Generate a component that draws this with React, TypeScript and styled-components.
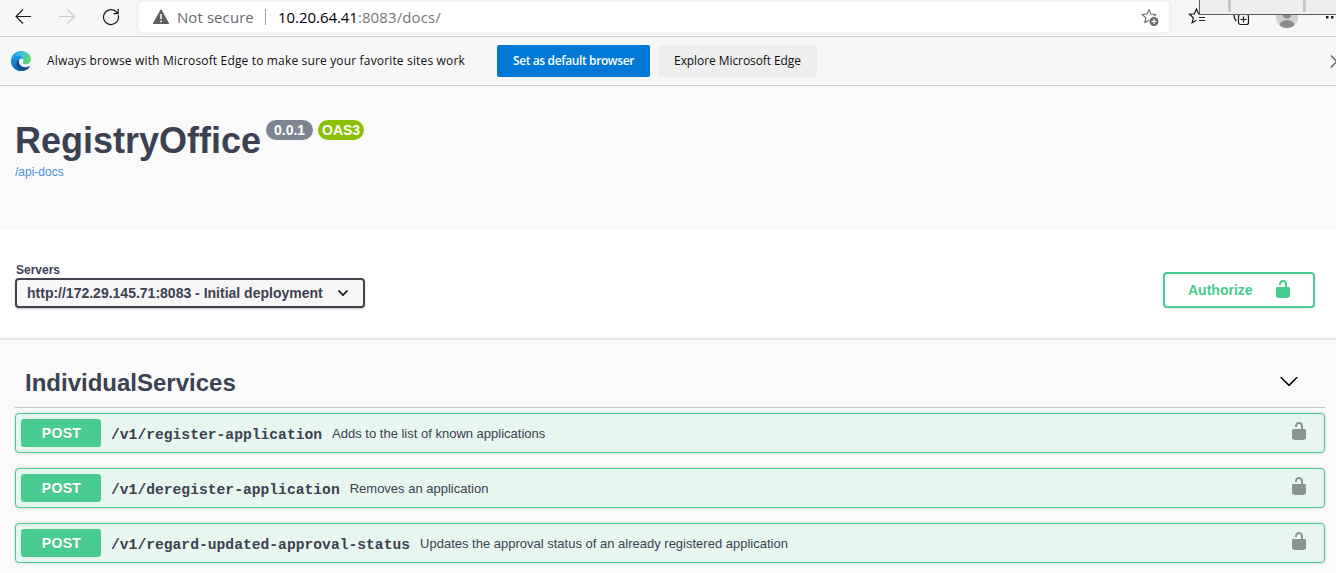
import React from "react";
import styled, { createGlobalStyle } from "styled-components";

const GlobalStyle = createGlobalStyle`
  *, *::before, *::after { box-sizing: border-box; }
  html, body { margin: 0; height: 573px; overflow: hidden; background: #fafafa; }
  body { font-family: "Liberation Sans", Arial, sans-serif; color: #3b4151; }
  svg { display: block; flex: none; }
  button { font: inherit; margin: 0; }
`;

const segoe = `"Open Sans", "Noto Sans", sans-serif`;

const Page = styled.div`
  position: relative;
  width: 1336px;
  height: 573px;
  overflow: hidden;
  background: #fafafa;
`;

const Toolbar = styled.header`
  display: flex;
  align-items: flex-start;
  height: 37px;
  padding: 2px 0 0 13px;
  background: #f7f7f7;
  border-bottom: 1px solid #d0d0d0;
`;

const NavButton = styled.span<{ $gap: number }>`
  display: flex;
  flex: none;
  width: 20px;
  height: 30px;
  align-items: center;
  justify-content: center;
  margin-right: ${(p) => p.$gap}px;
`;

const AddressBar = styled.div`
  display: flex;
  flex: none;
  align-items: center;
  width: 1030px;
  height: 30px;
  padding: 0 9px 0 13px;
  background: #fff;
  border-radius: 4px;
  box-shadow: 0 0 0 3px #f2f2f2;
  font-family: ${segoe};
  font-size: 15px;
  white-space: nowrap;
`;

const Security = styled.span`
  margin-left: 7px;
  width: 77px;
  color: #6b6b6b;
  letter-spacing: 0.08px;
`;

const Divider = styled.span`
  width: 1px;
  height: 16px;
  margin: 0 12px 0 11px;
  background: #9a9a9a;
`;

const Url = styled.span`
  flex: 1;
  color: #767676;
  letter-spacing: 0.1px;
  b { font-weight: 400; color: #000; letter-spacing: -0.05px; }
`;

const ToolIcons = styled.div`
  display: flex;
  flex: none;
  align-items: center;
  height: 30px;
  margin-left: 19px;
  gap: 24px;
`;

const CaptureStrip = styled.div`
  position: absolute;
  top: 0;
  right: 0;
  display: flex;
  width: 137px;
  height: 15px;
  padding-left: 28px;
  gap: 72px;
  background: #eee;
  border-left: 1px solid #5f5f5f;
  border-bottom: 1px solid #5f5f5f;
`;

const StripMark = styled.span`
  width: 3px;
  height: 12px;
  background: #c9c9c9;
`;

const Notice = styled.section`
  display: flex;
  align-items: center;
  height: 49px;
  padding-left: 11px;
  background: #f7f7f7;
  border-bottom: 1px solid #d0d0d0;
  font-family: ${segoe};
  font-size: 12px;
  color: #101010;
  white-space: nowrap;
`;

const NoticeText = styled.span`
  width: 450px;
  margin-left: 16px;
  padding-bottom: 2px;
  letter-spacing: 0.16px;
`;

const NoticeButton = styled.button<{ $primary?: boolean }>`
  width: ${(p) => (p.$primary ? 153 : 159)}px;
  height: 32px;
  margin-right: 8px;
  padding: 0 0 1px;
  border: 0;
  border-radius: 2px;
  font-size: 12px;
  font-weight: ${(p) => (p.$primary ? 600 : 500)};
  letter-spacing: ${(p) => (p.$primary ? -0.38 : -0.08)}px;
  color: ${(p) => (p.$primary ? "#fff" : "#101010")};
  background: ${(p) => (p.$primary ? "#0078d7" : "#eee")};
`;

const CloseSlot = styled.span`
  margin-left: auto;
  width: 6px;
  overflow: hidden;
`;

const Info = styled.section`
  height: 144px;
  padding: 34px 15px 0;
`;

const TitleRow = styled.div`
  display: flex;
  align-items: flex-start;
  height: 45px;
`;

const Title = styled.h1`
  margin: 0 5px 0 0;
  font-size: 36px;
  line-height: 42px;
  font-weight: 700;
`;

const Badge = styled.span<{ $color: string; $width: number }>`
  width: ${(p) => p.$width}px;
  height: 20px;
  margin: 0 5px 0 0;
  border-radius: 10px;
  background: ${(p) => p.$color};
  color: #fff;
  font-size: 14px;
  font-weight: 700;
  line-height: 21px;
  text-align: center;
`;

const DocsLink = styled.a`
  display: block;
  font-size: 12px;
  line-height: 14px;
  color: #4990e2;
`;

const Scheme = styled.section`
  display: flex;
  justify-content: space-between;
  align-items: flex-start;
  height: 108px;
  padding: 32px 21px 0 15px;
  background: #fff;
  box-shadow: 0 1px 2px rgba(0, 0, 0, 0.15);
`;

const ServersLabel = styled.div`
  height: 16px;
  padding-left: 1px;
  font-size: 12px;
  font-weight: 700;
  line-height: 16px;
`;

const Select = styled.div`
  display: flex;
  align-items: center;
  justify-content: space-between;
  width: 350px;
  height: 30px;
  padding: 0 14px 0 10px;
  border: 2px solid #41444e;
  border-radius: 4px;
  background: #f7f7f7;
  box-shadow: 0 1px 2px rgba(0, 0, 0, 0.25);
  font-size: 14px;
  font-weight: 700;
  white-space: nowrap;
`;

const Authorize = styled.button`
  display: flex;
  align-items: center;
  justify-content: space-between;
  width: 152px;
  height: 36px;
  margin-top: 10px;
  padding: 0 20px 0 23px;
  border: 2px solid #49cc90;
  border-radius: 4px;
  background: #fff;
  box-shadow: 0 1px 2px rgba(0, 0, 0, 0.1);
  color: #49cc90;
  font-size: 14px;
  font-weight: 700;
  svg { margin-bottom: 2px; }
`;

const Operations = styled.main`
  padding: 20px 11px 0 15px;
`;

const TagHeader = styled.h2`
  display: flex;
  align-items: center;
  justify-content: space-between;
  height: 50px;
  margin: 0 0 5px;
  padding: 0 26px 0 10px;
  border-bottom: 1px solid rgba(59, 65, 81, 0.3);
  font-size: 24px;
  font-weight: 700;
  svg { margin-bottom: 4px; }
`;

const Operation = styled.article`
  display: flex;
  align-items: center;
  height: 40px;
  margin-bottom: 15px;
  padding: 0 15px 0 5px;
  border: 1px solid #49cc90;
  border-radius: 4px;
  background: #e8f6f0;
  box-shadow: 0 0 3px rgba(0, 0, 0, 0.19);
  white-space: nowrap;
`;

const Method = styled.span`
  width: 80px;
  height: 28px;
  padding-left: 1px;
  border-radius: 3px;
  background: #49cc90;
  color: #fff;
  font-size: 14px;
  font-weight: 700;
  letter-spacing: 0.3px;
  line-height: 29px;
  text-align: center;
  text-shadow: 0 1px 0 rgba(0, 0, 0, 0.1);
`;

const Path = styled.span`
  margin: 4px 10px 0;
  font-family: "Liberation Mono", monospace;
  font-size: 14.66px;
  font-weight: 700;
`;

const Summary = styled.span`
  flex: 1;
  font-size: 13px;
`;

const LockSlot = styled.span`
  margin-bottom: 4px;
`;

const Lock = ({ color }: { color: string }) => (
  <svg width="20" height="20" viewBox="0 0 20 20" fill={color}>
    <path d="M15.8 8H14V5.6C14 2.703 12.665 1 10 1 7.334 1 6 2.703 6 5.6V6h2v-.801C8 3.754 8.797 3 10 3c1.203 0 2 .754 2 2.199V8H4c-.553 0-1 .646-1 1.199V17c0 .549.428 1.139.951 1.307l1.197.387C5.672 18.861 6.55 19 7.1 19h5.8c.549 0 1.428-.139 1.951-.307l1.196-.387c.524-.167.953-.757.953-1.306V9.199C17 8.646 16.352 8 15.8 8z" />
  </svg>
);

const Arrow = ({ color, flip }: { color: string; flip?: boolean }) => (
  <svg width="18" height="18" viewBox="0 0 18 18" fill="none" stroke={color} strokeWidth="1.1">
    <path d={flip ? "M1 8.5h15.500M9.500 1.500l7 7-7 7" : "M17 8.5H2M9 1.500l-7 7 7 7"} />
  </svg>
);

const EdgeLogo = () => (
  <svg width="20" height="20" viewBox="0 0 20 20">
    <defs>
      <linearGradient id="edgeTop" x1="0" y1="0.3" x2="1" y2="0.5">
        <stop offset="0" stopColor="#1b9fe0" />
        <stop offset="0.5" stopColor="#35c1d8" />
        <stop offset="1" stopColor="#66dc5c" />
      </linearGradient>
      <linearGradient id="edgeLeft" x1="0.3" y1="0" x2="0.5" y2="1">
        <stop offset="0" stopColor="#1b9de2" />
        <stop offset="1" stopColor="#1261b0" />
      </linearGradient>
    </defs>
    <path d="M0 9C.6 3.8 4.8 0 10.1 0 16 0 20 4.1 20 8.2c0 3-2.3 5-5.2 5-2.2 0-3.5-.8-3.1-1.5.5-.7.9-1.2.9-2.2C12.6 6.8 9.7 4.7 6.4 4.7 3.5 4.7 1 6.5 0 9z" fill="url(#edgeTop)" />
    <path d="M0 9c1-2.800 3.700-4.400 6.500-4.400 3.200 0 6 1.900 6.100 4.600-.8-1.600-2-2-3.300-1.400C6.600 9 5.300 11.600 6.100 14.500c.7 2.700 2.800 4.700 5.600 5.300C5.500 20.900-.6 16 0 9z" fill="url(#edgeLeft)" />
    <path d="M8.500 8.300c-1.900 3.800 1.400 8 5.800 8 1.800 0 3.100-.5 4.200-1.200.4-.2.700.1.500.5-1.400 2.500-4.200 4.400-7.300 4.300C7.800 19.500 5.300 16.300 5.300 13c0-2.100 1.200-3.900 3.200-4.700z" fill="#124f91" />
  </svg>
);

const operations = [
  { path: "/v1/register-application", summary: "Adds to the list of known applications" },
  { path: "/v1/deregister-application", summary: "Removes an application" },
  { path: "/v1/regard-updated-approval-status", summary: "Updates the approval status of an already registered application" },
];

const starPath = "M8 1.500l2 4.500 4.800.5-3.600 3.300 1 4.900L8 12.300l-4.200 2.400 1-4.900L1.200 6.500 6 6z";

export default function App() {
  return (
    <Page>
      <GlobalStyle />
      <Toolbar>
        <NavButton $gap={24}><Arrow color="#1a1a1a" /></NavButton>
        <NavButton $gap={24}><Arrow color="#c9c9c9" flip /></NavButton>
        <NavButton $gap={18}>
          <svg width="18" height="18" viewBox="0 0 18 18" fill="none" stroke="#1a1a1a" strokeWidth="1.2">
            <path d="M16.300 7.300A7.500 7.500 0 1 1 14 3.500l2 2M16.200 1v4.700h-4.700" />
          </svg>
        </NavButton>
        <AddressBar>
          <svg width="18" height="16" viewBox="0 0 18 16">
            <path d="M9 1l7.500 13.500h-15z" fill="#5f5f5f" stroke="#5f5f5f" strokeWidth="1.200" strokeLinejoin="round" />
            <path d="M9 5v5M9 11.500v1.700" stroke="#fff" strokeWidth="1.500" />
          </svg>
          <Security>Not secure</Security>
          <Divider />
          <Url><b>10.20.64.41</b>:8083/docs/</Url>
          <svg width="20" height="20" viewBox="0 0 20 20" fill="none">
            <path d={starPath} transform="translate(1 1)" stroke="#6b6b6b" strokeWidth="1.100" strokeLinejoin="round" />
            <circle cx="14" cy="14.500" r="5.300" fill="#fff" />
            <circle cx="14" cy="14.500" r="4.500" fill="#6b6b6b" />
            <path d="M11.500 14.500h5M14 12v5" stroke="#fff" strokeWidth="1.200" />
          </svg>
        </AddressBar>
        <ToolIcons>
          <svg width="20" height="20" viewBox="0 0 20 20" fill="none" stroke="#1a1a1a" strokeWidth="1.200">
            <path d="M12 7l-1.500-.2L8.500 2l-2 4.800-5 .5 3.800 3.500-1.200 5 4.400-2.500M11 10.500h6M11 13.500h6" />
          </svg>
          <svg width="20" height="20" viewBox="0 0 20 20" fill="none" stroke="#1a1a1a" strokeWidth="1.200">
            <rect x="6.500" y="7.500" width="10" height="10" rx="2" />
            <path d="M11.500 9.500v6M8.500 12.500h6M4.500 14C2.500 12.500 2 10.500 2 8V4h11" />
          </svg>
          <svg width="22" height="22" viewBox="0 0 22 22">
            <clipPath id="avatar"><circle cx="11" cy="11" r="11" /></clipPath>
            <g clipPath="url(#avatar)">
              <rect width="22" height="22" fill="#d2d0ce" />
              <circle cx="11" cy="8" r="4.500" fill="#8e8c8a" />
              <ellipse cx="11" cy="20" rx="7.800" ry="6" fill="#8e8c8a" />
            </g>
          </svg>
          <svg width="16" height="20" viewBox="0 0 16 20" fill="#1a1a1a">
            <rect x="4" y="9" width="2.500" height="2.500" /><rect x="9" y="9" width="2.500" height="2.500" />
          </svg>
        </ToolIcons>
      </Toolbar>
      <CaptureStrip><StripMark /><StripMark /></CaptureStrip>
      <Notice>
        <EdgeLogo />
        <NoticeText>Always browse with Microsoft Edge to make sure your favorite sites work</NoticeText>
        <NoticeButton $primary>Set as default browser</NoticeButton>
        <NoticeButton>Explore Microsoft Edge</NoticeButton>
        <CloseSlot>
          <svg width="13" height="13" viewBox="0 0 13 13" stroke="#555" strokeWidth="1.200">
            <path d="M1 .5l11 12M1 12.500L12 .5" fill="none" />
          </svg>
        </CloseSlot>
      </Notice>
      <Info>
        <TitleRow>
          <Title>RegistryOffice</Title>
          <Badge $color="#7d8492" $width={47}>0.0.1</Badge>
          <Badge $color="#89bf04" $width={46}>OAS3</Badge>
        </TitleRow>
        <DocsLink>/api-docs</DocsLink>
      </Info>
      <Scheme>
        <div>
          <ServersLabel>Servers</ServersLabel>
          <Select>
            http://172.29.145.71:8083 - Initial deployment
            <svg width="12" height="8" viewBox="0 0 12 8" fill="none" stroke="#111" strokeWidth="1.700">
              <path d="M1.500 1.500L6 6l4.500-4.500" />
            </svg>
          </Select>
        </div>
        <Authorize>Authorize<Lock color="#49cc90" /></Authorize>
      </Scheme>
      <Operations>
        <TagHeader>
          IndividualServices
          <svg width="20" height="20" viewBox="0 0 20 20">
            <path d="M17.418 6.109c.272-.268.709-.268.979 0s.271.701 0 .969l-7.908 7.830c-.270.268-.707.268-.979 0l-7.908-7.830c-.270-.268-.270-.701 0-.969.271-.268.709-.268.979 0L10 13.250l7.418-7.141z" />
          </svg>
        </TagHeader>
        {operations.map((op) => (
          <Operation key={op.path}>
            <Method>POST</Method>
            <Path>{op.path}</Path>
            <Summary>{op.summary}</Summary>
            <LockSlot><Lock color="#8b938f" /></LockSlot>
          </Operation>
        ))}
      </Operations>
    </Page>
  );
}
